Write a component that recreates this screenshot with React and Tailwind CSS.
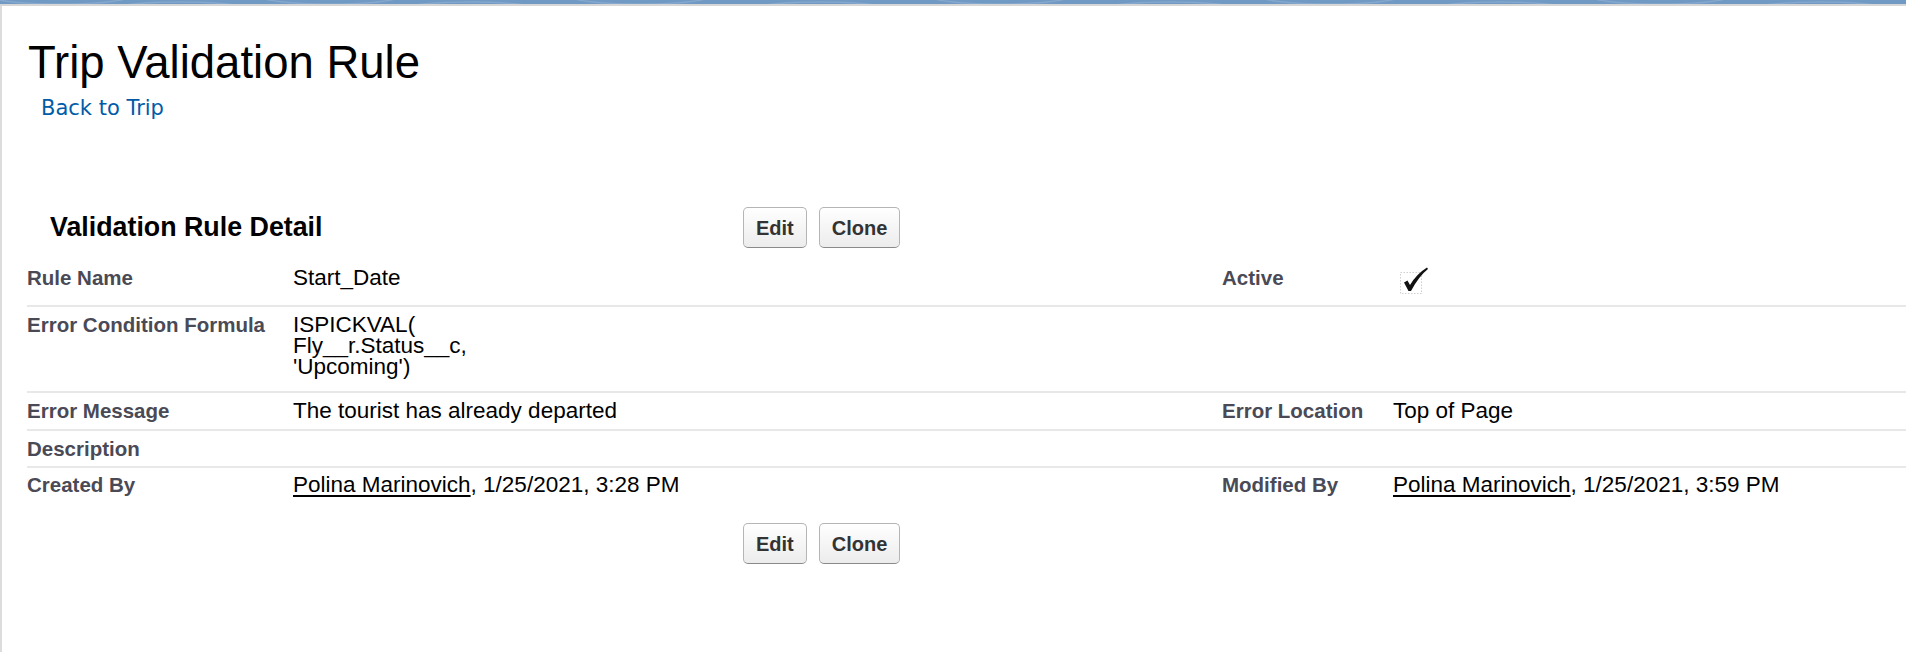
import React from 'react';

const rowGrid = 'grid grid-cols-[266px_929px_171px_1fr]';

function Label({ children }) {
  return (
    <div className="text-[20.5px] font-bold text-[#4a4a56] leading-[21px] whitespace-nowrap">
      {children}
    </div>
  );
}

function Value({ children }) {
  return <div className="text-[22.5px] text-black leading-[21px] whitespace-nowrap">{children}</div>;
}

function Btn({ children }) {
  return (
    <button className="h-[41px] px-[12px] rounded-[5px] border border-[#b5b5b5] border-b-[#8a8a8a] bg-gradient-to-b from-white to-[#ececec] text-[20px] font-bold text-[#333] leading-none font-['Liberation_Sans',Arial,sans-serif]">
      {children}
    </button>
  );
}

function Buttons() {
  return (
    <div className="flex gap-[12px]">
      <Btn>Edit</Btn>
      <Btn>Clone</Btn>
    </div>
  );
}

function CheckboxImg() {
  return (
    <svg width="30" height="30" viewBox="0 0 30 30" className="ml-[7px] -mt-[2px]">
      <rect x="0.5" y="7.5" width="21" height="21" fill="none" stroke="#cfcfcf" strokeDasharray="1.5 1.5" />
      <path d="M4 17.5 L7.5 15.5 L10 20 Q16.5 9 27 2.5 L28 4 Q19 11 11 26 L8.5 26 Z" fill="#111" />
    </svg>
  );
}

function Link({ children }) {
  return <span className="underline underline-offset-[3px] decoration-[1.5px]">{children}</span>;
}

export default function App() {
  return (
    <div className="min-h-screen bg-white font-['Liberation_Sans',Arial,sans-serif]">
      {/* top banner strip */}
      <div className="h-[4px] bg-[#7099c4] overflow-hidden">
        <svg width="1906" height="4" viewBox="0 0 1906 4" preserveAspectRatio="none">
          {[60, 180, 330, 470, 640, 820, 1000, 1170, 1330, 1500, 1660, 1820].map((x, i) => (
            <ellipse key={i} cx={x} cy={i % 2 ? 10 : -4} rx="70" ry="8" fill="none" stroke="#ffffff" strokeOpacity="0.15" strokeWidth="1.5" />
          ))}
        </svg>
      </div>
      <div className="h-[2px] bg-[#d6d6d6]" />

      <div className="border-l-2 border-[#dcdcdc] min-h-[646px] pt-[34px]">
        <div className="pl-[26px]">
          <h1 className="text-[45.5px] leading-[45px] text-black">Trip Validation Rule</h1>
          <div className="mt-[11px] pl-[13px]">
            <a className="text-[21px] leading-[24px] text-[#015ba7] font-['DejaVu_Sans',Verdana,sans-serif]">
              Back to Trip
            </a>
          </div>
        </div>

        {/* detail block header */}
        <div className="mt-[85px] flex items-center h-[41px]">
          <div className="w-[741px] pl-[48px] text-[26.8px] font-bold text-black">Validation Rule Detail</div>
          <Buttons />
        </div>

        <div className="mt-[12px] ml-[25px]">
          <div className={`${rowGrid} h-[47px] pt-[7px] border-b-2 border-[#e8e8e8]`}>
            <Label>Rule Name</Label>
            <Value>Start_Date</Value>
            <Label>Active</Label>
            <div>
              <CheckboxImg />
            </div>
          </div>

          <div className={`${rowGrid} h-[86px] pt-[7px] border-b-2 border-[#e8e8e8]`}>
            <Label>Error Condition Formula</Label>
            <Value>
              ISPICKVAL(
              <br />
              Fly__r.Status__c,
              <br />
              'Upcoming')
            </Value>
            <div />
            <div />
          </div>

          <div className={`${rowGrid} h-[38px] pt-[7px] border-b-2 border-[#e8e8e8]`}>
            <Label>Error Message</Label>
            <Value>The tourist has already departed</Value>
            <Label>Error Location</Label>
            <Value>Top of Page</Value>
          </div>

          <div className={`${rowGrid} h-[37px] pt-[7px] border-b-2 border-[#e8e8e8]`}>
            <Label>Description</Label>
            <Value />
            <div />
            <div />
          </div>

          <div className={`${rowGrid} h-[38px] pt-[6px]`}>
            <Label>Created By</Label>
            <Value>
              <Link>Polina Marinovich</Link>, 1/25/2021, 3:28 PM
            </Value>
            <Label>Modified By</Label>
            <Value>
              <Link>Polina Marinovich</Link>, 1/25/2021, 3:59 PM
            </Value>
          </div>
        </div>

        <div className="mt-[17px] pl-[741px]">
          <Buttons />
        </div>
      </div>
    </div>
  );
}
